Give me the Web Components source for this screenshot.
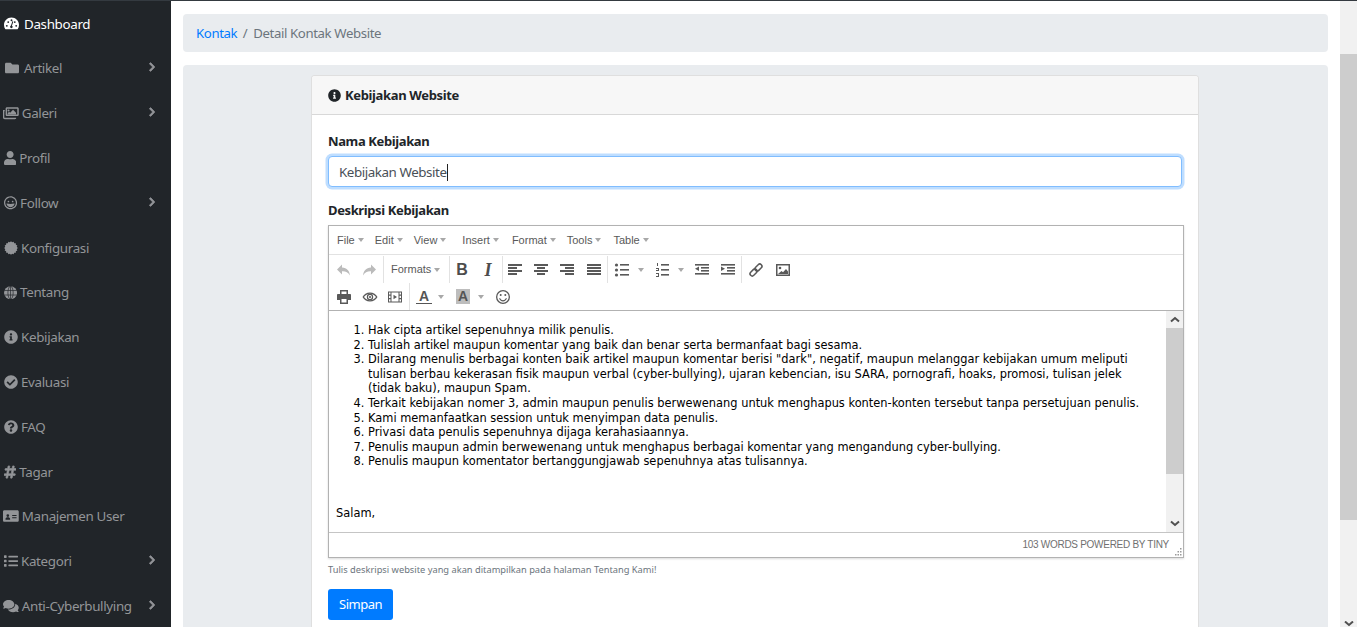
<!DOCTYPE html>
<html lang="id">
<head>
<meta charset="utf-8">
<title>Kebijakan Website</title>
<style>
  html, body { margin: 0; height: 100%; overflow: hidden; }
  body { font: 14px/1.5 "Noto Sans", "Open Sans", sans-serif; color: #212529; background: #fff; }
</style>
</head>
<body>
<app-shell>
  <side-nav slot="nav">
    <nav-item icon="dash" active>Dashboard</nav-item>
    <nav-item icon="folder" arrow>Artikel</nav-item>
    <nav-item icon="images" arrow>Galeri</nav-item>
    <nav-item icon="user">Profil</nav-item>
    <nav-item icon="grin" arrow>Follow</nav-item>
    <nav-item icon="cert">Konfigurasi</nav-item>
    <nav-item icon="globe">Tentang</nav-item>
    <nav-item icon="info">Kebijakan</nav-item>
    <nav-item icon="check">Evaluasi</nav-item>
    <nav-item icon="question">FAQ</nav-item>
    <nav-item icon="hash">Tagar</nav-item>
    <nav-item icon="idcard">Manajemen User</nav-item>
    <nav-item icon="list" arrow>Kategori</nav-item>
    <nav-item icon="comments" arrow>Anti-Cyberbullying</nav-item>
  </side-nav>

  <bread-crumb>
    <a slot="parent">Kontak</a>
    Detail Kontak Website
  </bread-crumb>

  <content-box>
    <policy-card heading="Kebijakan Website">
      <form-field label="Nama Kebijakan">
        <focus-input>Kebijakan Website</focus-input>
      </form-field>
      <form-field label="Deskripsi Kebijakan" tight>
        <tiny-editor>
          <ol>
            <li>Hak cipta artikel sepenuhnya milik penulis.</li>
            <li>Tulislah artikel maupun komentar yang baik dan benar serta bermanfaat bagi sesama.</li>
            <li>Dilarang menulis berbagai konten baik artikel maupun komentar berisi "dark", negatif, maupun melanggar kebijakan umum meliputi<br>tulisan berbau kekerasan fisik maupun verbal (cyber-bullying), ujaran kebencian, isu SARA, pornografi, hoaks, promosi, tulisan jelek<br>(tidak baku), maupun Spam.</li>
            <li>Terkait kebijakan nomer 3, admin maupun penulis berwewenang untuk menghapus konten-konten tersebut tanpa persetujuan penulis.</li>
            <li>Kami memanfaatkan session untuk menyimpan data penulis.</li>
            <li>Privasi data penulis sepenuhnya dijaga kerahasiaannya.</li>
            <li>Penulis maupun admin berwewenang untuk menghapus berbagai komentar yang mengandung cyber-bullying.</li>
            <li>Penulis maupun komentator bertanggungjawab sepenuhnya atas tulisannya.</li>
          </ol>
          <p>&nbsp;</p>
          <p>Salam,</p>
        </tiny-editor>
        <small slot="hint">Tulis deskripsi website yang akan ditampilkan pada halaman Tentang Kami!</small>
      </form-field>
      <primary-button>Simpan</primary-button>
    </policy-card>
  </content-box>
</app-shell>

<script>
// gear edge of the certificate icon
const burst = (() => {
  let d = '';
  for (let i = 0; i < 32; i++) {
    const r = i % 2 ? 214 : 250;
    const a = i * Math.PI / 16;
    d += `${i ? 'L' : 'M'}${(256 + r * Math.sin(a)).toFixed(1)} ${(256 - r * Math.cos(a)).toFixed(1)}`;
  }
  return d + 'z';
})();

// font awesome style icons, size comes from the height set by the caller
const FA = {
  folder: ['0 0 512 512', '<path d="M464 128H272l-64-64H48C21.49 64 0 85.49 0 112v288c0 26.51 21.49 48 48 48h416c26.51 0 48-21.49 48-48V176c0-26.51-21.49-48-48-48z"/>'],
  user: ['0 0 448 512', '<path d="M224 256c70.7 0 128-57.3 128-128S294.7 0 224 0 96 57.3 96 128s57.3 128 128 128zm89.6 32h-16.7c-22.2 10.2-46.9 16-72.9 16s-50.6-5.8-72.9-16h-16.7C60.2 288 0 348.2 0 422.4V464c0 26.5 21.5 48 48 48h352c26.5 0 48-21.5 48-48v-41.6c0-74.2-60.2-134.4-134.4-134.4z"/>'],
  info: ['0 0 512 512', '<path d="M256 8C119.043 8 8 119.083 8 256c0 136.997 111.043 248 248 248s248-111.003 248-248C504 119.083 392.957 8 256 8zm0 110c23.196 0 42 18.804 42 42s-18.804 42-42 42-42-18.804-42-42 18.804-42 42-42zm56 254c0 6.627-5.373 12-12 12h-88c-6.627 0-12-5.373-12-12v-24c0-6.627 5.373-12 12-12h12v-64h-12c-6.627 0-12-5.373-12-12v-24c0-6.627 5.373-12 12-12h64c6.627 0 12 5.373 12 12v100h12c6.627 0 12 5.373 12 12v24z"/>'],
  check: ['0 0 512 512', '<path d="M504 256c0 136.967-111.033 248-248 248S8 392.967 8 256 119.033 8 256 8s248 111.033 248 248zM227.314 387.314l184-184c6.248-6.248 6.248-16.379 0-22.627l-22.627-22.627c-6.248-6.249-16.379-6.249-22.628 0L216 308.118l-70.059-70.059c-6.248-6.248-16.379-6.248-22.628 0l-22.627 22.627c-6.248 6.248-6.248 16.379 0 22.627l104 104c6.249 6.249 16.379 6.249 22.628.001z"/>'],
  question: ['0 0 512 512', '<path d="M504 256c0 136.997-111.043 248-248 248S8 392.997 8 256C8 119.083 119.043 8 256 8s248 111.083 248 248zM262.655 90c-54.497 0-89.255 22.957-116.549 63.758-3.536 5.286-2.353 12.415 2.715 16.258l34.699 26.31c5.205 3.947 12.621 3.008 16.665-2.122 17.864-22.658 30.113-35.797 57.303-35.797 20.429 0 45.698 13.148 45.698 32.958 0 14.976-12.363 22.667-32.534 33.976C247.128 238.528 216 254.941 216 296v4c0 6.627 5.373 12 12 12h56c6.627 0 12-5.373 12-12v-1.333c0-28.462 83.186-29.647 83.186-106.667 0-58.002-60.165-102-116.531-102zM256 338c-25.365 0-46 20.635-46 46 0 25.364 20.635 46 46 46s46-20.636 46-46c0-25.365-20.635-46-46-46z"/>'],
  hash: ['0 0 448 512', '<path stroke="currentColor" stroke-width="24" d="M440.667 182.109l7.143-40c1.313-7.355-4.342-14.109-11.813-14.109h-74.81l14.623-81.891C377.123 38.754 371.468 32 363.997 32h-40.632a12 12 0 0 0-11.813 9.891L296.175 128H197.54l14.623-81.891C213.477 38.754 207.822 32 200.35 32h-40.632a12 12 0 0 0-11.813 9.891L132.528 128H53.432a12 12 0 0 0-11.813 9.891l-7.143 40C33.163 185.246 38.818 192 46.289 192h74.81L98.242 320H19.146a12 12 0 0 0-11.813 9.891l-7.143 40C-1.123 377.246 4.532 384 12.003 384h74.81L72.19 465.891C70.877 473.246 76.532 480 84.003 480h40.632a12 12 0 0 0 11.813-9.891L151.825 384h98.635l-14.623 81.891C234.523 473.246 240.178 480 247.65 480h40.632a12 12 0 0 0 11.813-9.891L315.472 384h79.096a12 12 0 0 0 11.813-9.891l7.143-40c1.313-7.355-4.342-14.109-11.813-14.109h-74.81l22.857-128h79.096a12 12 0 0 0 11.813-9.891zM261.889 320h-98.635l22.857-128h98.635l-22.857 128z"/>'],
  list: ['0 0 512 512', '<path d="M80 368H16a16 16 0 0 0-16 16v64a16 16 0 0 0 16 16h64a16 16 0 0 0 16-16v-64a16 16 0 0 0-16-16zm0-320H16A16 16 0 0 0 0 64v64a16 16 0 0 0 16 16h64a16 16 0 0 0 16-16V64a16 16 0 0 0-16-16zm0 160H16a16 16 0 0 0-16 16v64a16 16 0 0 0 16 16h64a16 16 0 0 0 16-16v-64a16 16 0 0 0-16-16zm416 176H176a16 16 0 0 0-16 16v32a16 16 0 0 0 16 16h320a16 16 0 0 0 16-16v-32a16 16 0 0 0-16-16zm0-320H176a16 16 0 0 0-16 16v32a16 16 0 0 0 16 16h320a16 16 0 0 0 16-16V80a16 16 0 0 0-16-16zm0 160H176a16 16 0 0 0-16 16v32a16 16 0 0 0 16 16h320a16 16 0 0 0 16-16v-32a16 16 0 0 0-16-16z"/>'],
  angle: ['0 0 320 512', '<path stroke="currentColor" stroke-width="40" d="M285.476 272.971L91.132 467.314c-9.373 9.373-24.569 9.373-33.941 0l-22.667-22.667c-9.357-9.357-9.375-24.522-.04-33.901L188.505 256 34.484 101.255c-9.335-9.379-9.317-24.544.04-33.901l22.667-22.667c9.373-9.373 24.569-9.373 33.941 0L285.475 239.03c9.373 9.372 9.373 24.568.001 33.941z"/>'],
  dash: ['0 0 512 512', '<path fill-rule="evenodd" d="M256 48C115 48 0 163 0 304c0 52 15 100 42 140 6 8 15 12 24 12h380c9 0 18-4 24-12 27-40 42-88 42-140C512 163 397 48 256 48zM256 112a32 32 0 1 1 0 64 32 32 0 0 1 0-64zM96 368a32 32 0 1 1 0-64 32 32 0 0 1 0 64zm48-128a32 32 0 1 1 0-64 32 32 0 0 1 0 64zm112 176c-26 0-48-22-48-48 0-20 13-38 31-45l44-132c3-8 12-13 20-10 9 3 13 12 11 20l-44 132c16 8 26 23 26 35 0 26-22 48-40 48zm112-176a32 32 0 1 1 0-64 32 32 0 0 1 0 64zm48 128a32 32 0 1 1 0-64 32 32 0 0 1 0 64z"/>'],
  images: ['0 0 576 512', '<path fill-rule="evenodd" d="M144 48h384c26 0 48 22 48 48v224c0 26-22 48-48 48H144c-26 0-48-22-48-48V96c0-26 22-48 48-48zm6 48v218h372V96H150zm54 30a36 36 0 1 1 0 72 36 36 0 0 1 0-72zm-30 172v-40l50-50 36 36 108-108 108 108v54H174zM0 144h64v48H48v224c0 9 7 16 16 16h416v16c0 26-22 32-48 32H64c-35 0-64-29-64-64V144z"/>'],
  grin: ['0 0 496 512', '<path fill-rule="evenodd" d="M248 8C111 8 0 119 0 256s111 248 248 248 248-111 248-248S385 8 248 8zm0 448c-110 0-200-90-200-200S138 56 248 56s200 90 200 200-90 200-200 200zm-80-216a32 32 0 1 0 0-64 32 32 0 0 0 0 64zm160 0a32 32 0 1 0 0-64 32 32 0 0 0 0 64zM108 288c-7-1-14 6-12 14 14 76 88 122 152 122s138-46 152-122c2-8-5-15-12-14-45 7-90 11-140 11s-95-4-140-11z"/>'],
  cert: ['0 0 512 512', `<path d="${burst}"/>`],
  globe: ['0 0 496 512', '<circle cx="248" cy="256" r="248"/><g fill="none" stroke="#212529" stroke-width="26"><ellipse cx="248" cy="256" rx="100" ry="248"/><path d="M248 8v496M10 170h476M10 342h476"/></g>'],
  idcard: ['0 0 576 512', '<path fill-rule="evenodd" d="M48 48h480c26 0 48 22 48 48v320c0 26-22 48-48 48H48c-26 0-48-22-48-48V96c0-26 22-48 48-48zM176 190a50 50 0 1 0 0 100 50 50 0 0 0 0-100zM92 390h168v-30c0-32-36-54-84-54s-84 22-84 54zM336 220h160v36H336zM336 300h160v36H336z"/>'],
  comments: ['0 0 576 512', '<path d="M416 192c0-88-93-160-208-160S0 104 0 192c0 34 14 66 38 92-14 30-34 52-35 53-2 2-3 6-2 9 2 3 4 5 8 5 37 0 67-13 89-26 33 16 71 27 110 27 115 0 208-72 208-160z"/><path d="M538 412c24-26 38-58 38-92 0-67-53-124-129-148 1 7 1 13 1 20 0 106-108 192-240 192-11 0-21-1-32-2 32 57 106 98 192 98 39 0 77-11 110-27 22 13 52 26 89 26 4 0 6-2 8-5 1-3 0-7-2-9-1-1-21-23-35-53z"/>']
};

// [icon height, left nudge, gap to the label]
const NAV_ICON = {
  dash: [15, 0, 5], folder: [14, 1, 5], images: [14, -1, 3], user: [14, 0, 3], grin: [13.5, 0, 3],
  cert: [14, 0, 3], globe: [13.5, 0, 3], info: [14, 0, 3], check: [14, 0, 3], question: [14, 0, 3],
  hash: [14, 0, 3], idcard: [14, -1, 3], list: [14, 0, 3], comments: [14, -1, 3]
};

function faIcon(name, h) {
  const [box, body] = FA[name];
  const parts = box.split(' ');
  const w = (h * parts[2] / parts[3]).toFixed(2);
  return `<svg width="${w}" height="${h}" viewBox="${box}" fill="currentColor" aria-hidden="true">${body}</svg>`;
}

// editor toolbar icons, all on a 16px grid
const bars = (rows) => rows.map(r => `<rect x="${r[0]}" y="${r[1]}" width="${r[2]}" height="${r[3] || 2}"/>`).join('');
const MCE = {
  undo: '<path d="M6 2.5L1 7.5l5 5V9.2c3.6-.2 6 1 8 4.3C13.6 9 11 5.6 6 5.4z"/>',
  redo: '<path d="M10 2.5l5 5-5 5V9.2c-3.6-.2-6 1-8 4.3C2.4 9 5 5.6 10 5.4z"/>',
  alignleft: bars([[1, 2, 14], [1, 5, 9], [1, 8, 14], [1, 11, 9]]),
  aligncenter: bars([[1, 2, 14], [4, 5, 8], [1, 8, 14], [4, 11, 8]]),
  alignright: bars([[1, 2, 14], [6, 5, 9], [1, 8, 14], [6, 11, 9]]),
  alignjustify: bars([[1, 2, 14], [1, 5, 14], [1, 8, 14], [1, 11, 14]]),
  bullist: '<circle cx="2.5" cy="3" r="1.6"/><circle cx="2.5" cy="8" r="1.6"/><circle cx="2.5" cy="13" r="1.6"/>' + bars([[6, 2, 9, 1.6], [6, 7, 9, 1.6], [6, 12, 9, 1.6]]),
  numlist: bars([[2, 1, 1, 3], [1, 6, 3, 1], [3, 7, 1, 1], [1, 8, 3, 1], [1, 11, 3, 1], [3, 12, 1, 2], [1, 14, 3, 1], [6, 2, 8, 1.6], [6, 7, 8, 1.6], [6, 12, 8, 1.6]]),
  outdent: bars([[1, 2, 14, 1.6], [7, 5, 8, 1.6], [7, 8, 8, 1.6], [1, 11, 14, 1.6]]) + '<path d="M1 6.8L5 4.5v4.6z"/>',
  indent: bars([[1, 2, 14, 1.6], [7, 5, 8, 1.6], [7, 8, 8, 1.6], [1, 11, 14, 1.6]]) + '<path d="M5 6.8L1 4.5v4.6z"/>',
  link: '<g fill="none" stroke="currentColor" stroke-width="1.5" transform="rotate(-45 8 8)"><rect x=".5" y="5.8" width="8" height="4.4" rx="2.2"/><rect x="7.5" y="5.8" width="8" height="4.4" rx="2.2"/></g>',
  image: '<path fill-rule="evenodd" d="M1 2h14v12H1zM2.5 3.5v9h11v-9z"/><circle cx="5" cy="6" r="1.3"/><path d="M3 12l3.5-3 1.5 1.2L11 7l2 2.5V12z"/>',
  print: '<path fill-rule="evenodd" d="M4 1h8v4h2.2c.4 0 .8.4.8.8V11h-3v4H4v-4H1V5.8c0-.4.4-.8.8-.8H4zM5.5 2.5V5h5V2.5zM5.500 10v3.500h5V10z"/>',
  preview: '<path fill-rule="evenodd" d="M8 3.500C4.600 3.500 1.800 5.400.5 8c1.300 2.600 4.100 4.500 7.500 4.500s6.200-1.900 7.500-4.500C14.200 5.400 11.400 3.500 8 3.500zM2 8c1.300-1.900 3.500-3.300 6-3.300s4.700 1.400 6 3.300c-1.300 1.900-3.500 3.300-6 3.300S3.300 9.900 2 8z"/><path fill-rule="evenodd" d="M8 4.800a3.200 3.200 0 1 0 0 6.400 3.200 3.200 0 0 0 0-6.400zm0 1.200a2 2 0 1 1 0 4 2 2 0 0 1 0-4z"/><circle cx="8" cy="8" r="1.100"/>',
  media: '<path fill-rule="evenodd" d="M1 2.500h14v11H1zM2 3.500v2h1.500v-2zM2 6.800V9h1.500V6.800zM2 10.300v2.200h1.500v-2.200zM12.500 3.500v2H14v-2zM12.500 6.800V9H14V6.800zM12.500 10.300v2.200H14v-2.200zM4.500 3.500v9h7v-9z"/><path d="M6.500 5.800L10 8l-3.500 2.200z"/>',
  emoticons: '<path fill-rule="evenodd" d="M8 1a7 7 0 1 0 0 14A7 7 0 0 0 8 1zm0 1.300a5.700 5.700 0 1 1 0 11.400A5.700 5.700 0 0 1 8 2.300z"/><circle cx="5.700" cy="6" r="1"/><circle cx="10.300" cy="6" r="1"/><path d="M4 9.200h1.200c.5 1.300 1.600 2 2.800 2s2.300-.7 2.800-2H12c-.6 2-2.200 3.200-4 3.200S4.600 11.200 4 9.200z"/>'
};

const define = (tag, css, html, extra) => {
  const tpl = document.createElement('template');
  tpl.innerHTML = `<style>${css}</style>${html}`;
  customElements.define(tag, class extends HTMLElement {
    constructor() {
      super();
      this.attachShadow({ mode: 'open' }).appendChild(tpl.content.cloneNode(true));
      if (extra) extra.call(this, this.shadowRoot);
    }
  });
};

define('app-shell', `
  :host { display: flex; height: 627px; overflow: hidden; border-top: 1px solid #343a40; box-sizing: border-box; }
  .nav { flex: 0 0 171px; background: #212529; margin-top: -1px; }
  main { flex: 1; min-width: 0; padding: 13px 12px 0; }
`, `
  <div class="nav"><slot name="nav"></slot></div>
  <main><slot></slot></main>
  <page-scrollbar></page-scrollbar>
`);

define('page-scrollbar', `
  :host { display: flex; flex-direction: column; flex: 0 0 17px; background: #f1f1f1; margin-top: -1px; height: 627px; color: #505050; }
  .gap { flex: 0 0 54px; }
  .thumb { flex: 0 0 466px; background: #cdcdcd; }
  .rest { flex: 1; display: flex; align-items: flex-end; justify-content: center; }
  svg { display: block; }
`, `
  <div class="gap"></div><div class="thumb"></div>
  <div class="rest"><svg width="10" height="6" viewBox="0 0 10 6"><path d="M1 .5L5 4l4-3.500" fill="none" stroke="currentColor" stroke-width="2"/></svg></div>
`);

define('side-nav', `:host { display: block; padding-top: 1.250px; font-size: 13.400px; letter-spacing: -.35px; }`, `<slot></slot>`);

define('nav-item', `
  :host { display: flex; align-items: center; height: 44.800px; box-sizing: border-box; padding: 0 16px 0 4px; color: #939598; white-space: nowrap; }
  :host([active]) { color: #fff; }
  .icon { display: flex; }
  .arrow { margin-left: auto; display: flex; position: relative; top: -1px; }
  .arrow[hidden] { display: none; }
  svg { display: block; }
`, `<span class="icon"></span><slot></slot><span class="arrow" hidden></span>`, function (root) {
  const name = this.getAttribute('icon');
  const [h, nudge, gap] = NAV_ICON[name];
  const icon = root.querySelector('.icon');
  icon.innerHTML = faIcon(name, h);
  icon.style.margin = `0 ${gap}px 0 ${nudge}px`;
  if (this.hasAttribute('arrow')) {
    const a = root.querySelector('.arrow');
    a.hidden = false;
    a.innerHTML = faIcon('angle', 10);
  }
});

define('bread-crumb', `
  :host { display: flex; align-items: center; height: 38px; box-sizing: border-box; padding: 1px 13px 0; background: #e9ecef; border-radius: 4px; color: #6c757d; margin-bottom: 13px; font-size: 13.200px; letter-spacing: -.38px; }
  ::slotted(a) { color: #007bff; }
  .sep { padding: 0 6px 0 5.500px; }
`, `<slot name="parent"></slot><span class="sep">/</span><slot></slot>`);

define('content-box', `
  :host { display: block; background: #e9ecef; border-radius: 4px; padding: 10px 129px 0 128px; height: 600px; }
`, `<slot></slot>`);

define('policy-card', `
  :host { display: block; background: #fff; border: 1px solid rgba(0,0,0,.125); border-radius: 4px; }
  header { display: flex; align-items: center; gap: 4px; height: 38px; padding: 0 16px; background: #f7f7f7; border-bottom: 1px solid rgba(0,0,0,.125); border-radius: 3px 3px 0 0; font-weight: 700; font-size: 13px; letter-spacing: -.35px; color: #212529; }
  header svg { display: block; }
  .t { position: relative; top: 1px; }
  .body { padding: 16px 16px 20px; }
`, `
  <header><span class="ic"></span><span class="t"></span></header>
  <div class="body"><slot></slot></div>
`, function (root) {
  root.querySelector('.ic').innerHTML = faIcon('info', 13);
  root.querySelector('.t').textContent = this.getAttribute('heading');
});

define('form-field', `
  :host { display: block; margin-bottom: 13px; }
  :host([tight]) { margin-bottom: 11px; }
  label { display: block; font-weight: 700; font-size: 13px; letter-spacing: -.38px; line-height: 21px; margin-bottom: 4px; color: #212529; }
  .hint { display: block; margin-top: 2px; font-size: 11.150px; line-height: 17px; color: #6c757d; }
`, `<label></label><slot></slot><div class="hint"><slot name="hint"></slot></div>`, function (root) {
  root.querySelector('label').textContent = this.getAttribute('label');
  if (!this.hasAttribute('tight')) root.querySelector('.hint').remove();
});

define('focus-input', `
  :host { display: flex; align-items: center; height: 31px; box-sizing: border-box; padding: 1px 10px 0; border: 1px solid #80bdff; border-radius: 4px; box-shadow: 0 0 0 2.500px rgba(0,123,255,.25); background: #fff; color: #495057; font-size: 13.400px; letter-spacing: -.45px; }
  i { display: block; width: 1px; height: 17px; background: #222; }
`, `<slot></slot><i></i>`);

define('primary-button', `
  :host { display: inline-flex; align-items: center; justify-content: center; width: 65px; height: 31px; background: #007bff; color: #fff; border-radius: 3px; font-size: 13px; letter-spacing: -.5px; }
`, `<slot></slot>`);

define('tb-button', `
  :host { display: flex; align-items: center; justify-content: center; width: 26px; height: 27px; color: #595959; flex: none; }
  :host([off]) { color: #bbb; }
  svg { display: block; }
`, `<slot></slot>`, function (root) {
  const name = this.getAttribute('icon');
  if (name) root.innerHTML += `<svg width="16" height="16" viewBox="0 0 16 16" fill="currentColor">${MCE[name]}</svg>`;
});

define('tb-caret', `
  :host { display: block; width: 0; height: 0; flex: none; border-style: solid; border-width: 4px 3.500px 0; border-color: #a8a8a8 transparent transparent; }
`, ``);

define('tiny-editor', `
  :host { display: flex; flex-direction: column; box-sizing: border-box; width: calc(100% + 2px); height: 333px; border: 1px solid #b2b2b2; box-shadow: 0 1px 2px rgba(0,0,0,.15); background: #fff; font: 11px/1 "Liberation Sans", Arial, sans-serif; color: #595959; }
  .menu { display: flex; align-items: center; flex: 0 0 28px; padding-left: 8px; border-bottom: 1px solid #e2e2e2; }
  .menu span { display: flex; align-items: center; gap: 3px; }
  .tools { flex: none; height: 55px; border-bottom: 1px solid #b2b2b2; padding-left: 2px; }
  .row { display: flex; align-items: center; height: 27px; }
  .row.first { margin-top: 1px; }
  .sep { flex: none; width: 1px; height: 27px; background: #e2e2e2; }
  .formats { flex: none; width: 65px; display: flex; align-items: center; gap: 3px; padding-left: 7px; box-sizing: border-box; }
  .bold { font: 700 16px/1 "Liberation Sans", sans-serif; color: #4d4d4d; }
  .ital { font: italic 700 18px/1 "Liberation Serif", serif; color: #4d4d4d; }
  .swatch { font: 700 14px/1 "Liberation Sans", sans-serif; color: #555; display: block; padding: 0 3px; border-bottom: 1px solid #555; }
  .swatch.bg { background: #bdbdbd; border-bottom: 0; padding: 0 2px 1px; }
  .edit { flex: 1; min-height: 0; display: flex; }
  .page { flex: 1; min-width: 0; overflow: hidden; padding: 12px 7px 0 7px; font: 11.420px/14.600px "DejaVu Sans", Verdana, sans-serif; color: #000; white-space: nowrap; }
  .scroll { flex: 0 0 17px; display: flex; flex-direction: column; background: #f1f1f1; color: #505050; }
  .scroll .btn { flex: 0 0 17px; display: flex; align-items: center; justify-content: center; }
  .scroll .thumb { flex: 0 0 146px; background: #cdcdcd; }
  .scroll .track { flex: 1; }
  .status { flex: 0 0 25px; box-sizing: border-box; padding: 0 14px 0 0; border-top: 1px solid #c5c5c5; display: flex; align-items: center; justify-content: flex-end; font-size: 10px; letter-spacing: -.28px; color: #707070; position: relative; }
  .grip { position: absolute; right: 1px; bottom: 1px; width: 8px; height: 8px; }
  ::slotted(ol) { margin: 0; padding-left: 32px; }
  ::slotted(p) { margin: 11px 0 0; }
`, `
  <div class="menu">
    <span style="margin-right:11px">File<tb-caret></tb-caret></span><span style="margin-right:11px">Edit<tb-caret></tb-caret></span><span style="margin-right:16px">View<tb-caret></tb-caret></span><span style="margin-right:13px">Insert<tb-caret></tb-caret></span><span style="margin-right:11px">Format<tb-caret></tb-caret></span><span style="margin-right:12px">Tools<tb-caret></tb-caret></span><span>Table<tb-caret></tb-caret></span>
  </div>
  <div class="tools">
    <div class="row first">
      <tb-button icon="undo" off></tb-button><tb-button icon="redo" off style="margin-left:-1px;margin-right:1px"></tb-button><div class="sep"></div>
      <div class="formats">Formats<tb-caret></tb-caret></div><div class="sep"></div>
      <tb-button style="margin-left:-1px"><span class="bold">B</span></tb-button><tb-button><span class="ital">I</span></tb-button><div class="sep" style="margin-left:1px"></div>
      <tb-button icon="alignleft" style="margin-left:-1px"></tb-button><tb-button icon="aligncenter"></tb-button><tb-button icon="alignright"></tb-button><tb-button icon="alignjustify" style="margin-left:1px"></tb-button><div class="sep"></div>
      <tb-button icon="bullist" style="width:28px"></tb-button><tb-caret style="margin-left:2px"></tb-caret><tb-button icon="numlist" style="margin-left:6px"></tb-button><tb-caret style="margin-left:2px"></tb-caret><tb-button icon="outdent" style="margin-left:5px"></tb-button><tb-button icon="indent"></tb-button><div class="sep" style="margin-right:1px"></div>
      <tb-button icon="link"></tb-button><tb-button icon="image" style="margin-left:1px"></tb-button>
    </div>
    <div class="row">
      <tb-button icon="print"></tb-button><tb-button icon="preview"></tb-button><tb-button icon="media" style="margin-left:-1px;margin-right:1px"></tb-button><div class="sep"></div>
      <tb-button style="margin-left:1px"><span class="swatch">A</span></tb-button><tb-caret style="margin-left:1px"></tb-caret><tb-button style="margin-left:6px"><span class="swatch bg">A</span></tb-button><tb-caret style="margin-left:2px"></tb-caret><tb-button icon="emoticons" style="margin-left:6px"></tb-button>
    </div>
  </div>
  <div class="edit">
    <div class="page"><slot></slot></div>
    <div class="scroll">
      <div class="btn"><svg width="10" height="7" viewBox="0 0 10 7"><path d="M1 5.500L5 2l4 3.500" fill="none" stroke="currentColor" stroke-width="2"/></svg></div>
      <div class="thumb"></div><div class="track"></div>
      <div class="btn"><svg width="10" height="7" viewBox="0 0 10 7"><path d="M1 1.500L5 5l4-3.500" fill="none" stroke="currentColor" stroke-width="2"/></svg></div>
    </div>
  </div>
  <div class="status">103 WORDS POWERED BY TINY
    <svg class="grip" viewBox="0 0 8 8" fill="#9a9a9a"><rect x="6" y="0" width="1.500" height="1.500"/><rect x="3.500" y="3" width="1.500" height="1.500"/><rect x="6" y="3" width="1.500" height="1.500"/><rect x="1" y="6" width="1.500" height="1.500"/><rect x="3.500" y="6" width="1.500" height="1.500"/><rect x="6" y="6" width="1.500" height="1.500"/></svg>
  </div>
`);
</script>
</body>
</html>
